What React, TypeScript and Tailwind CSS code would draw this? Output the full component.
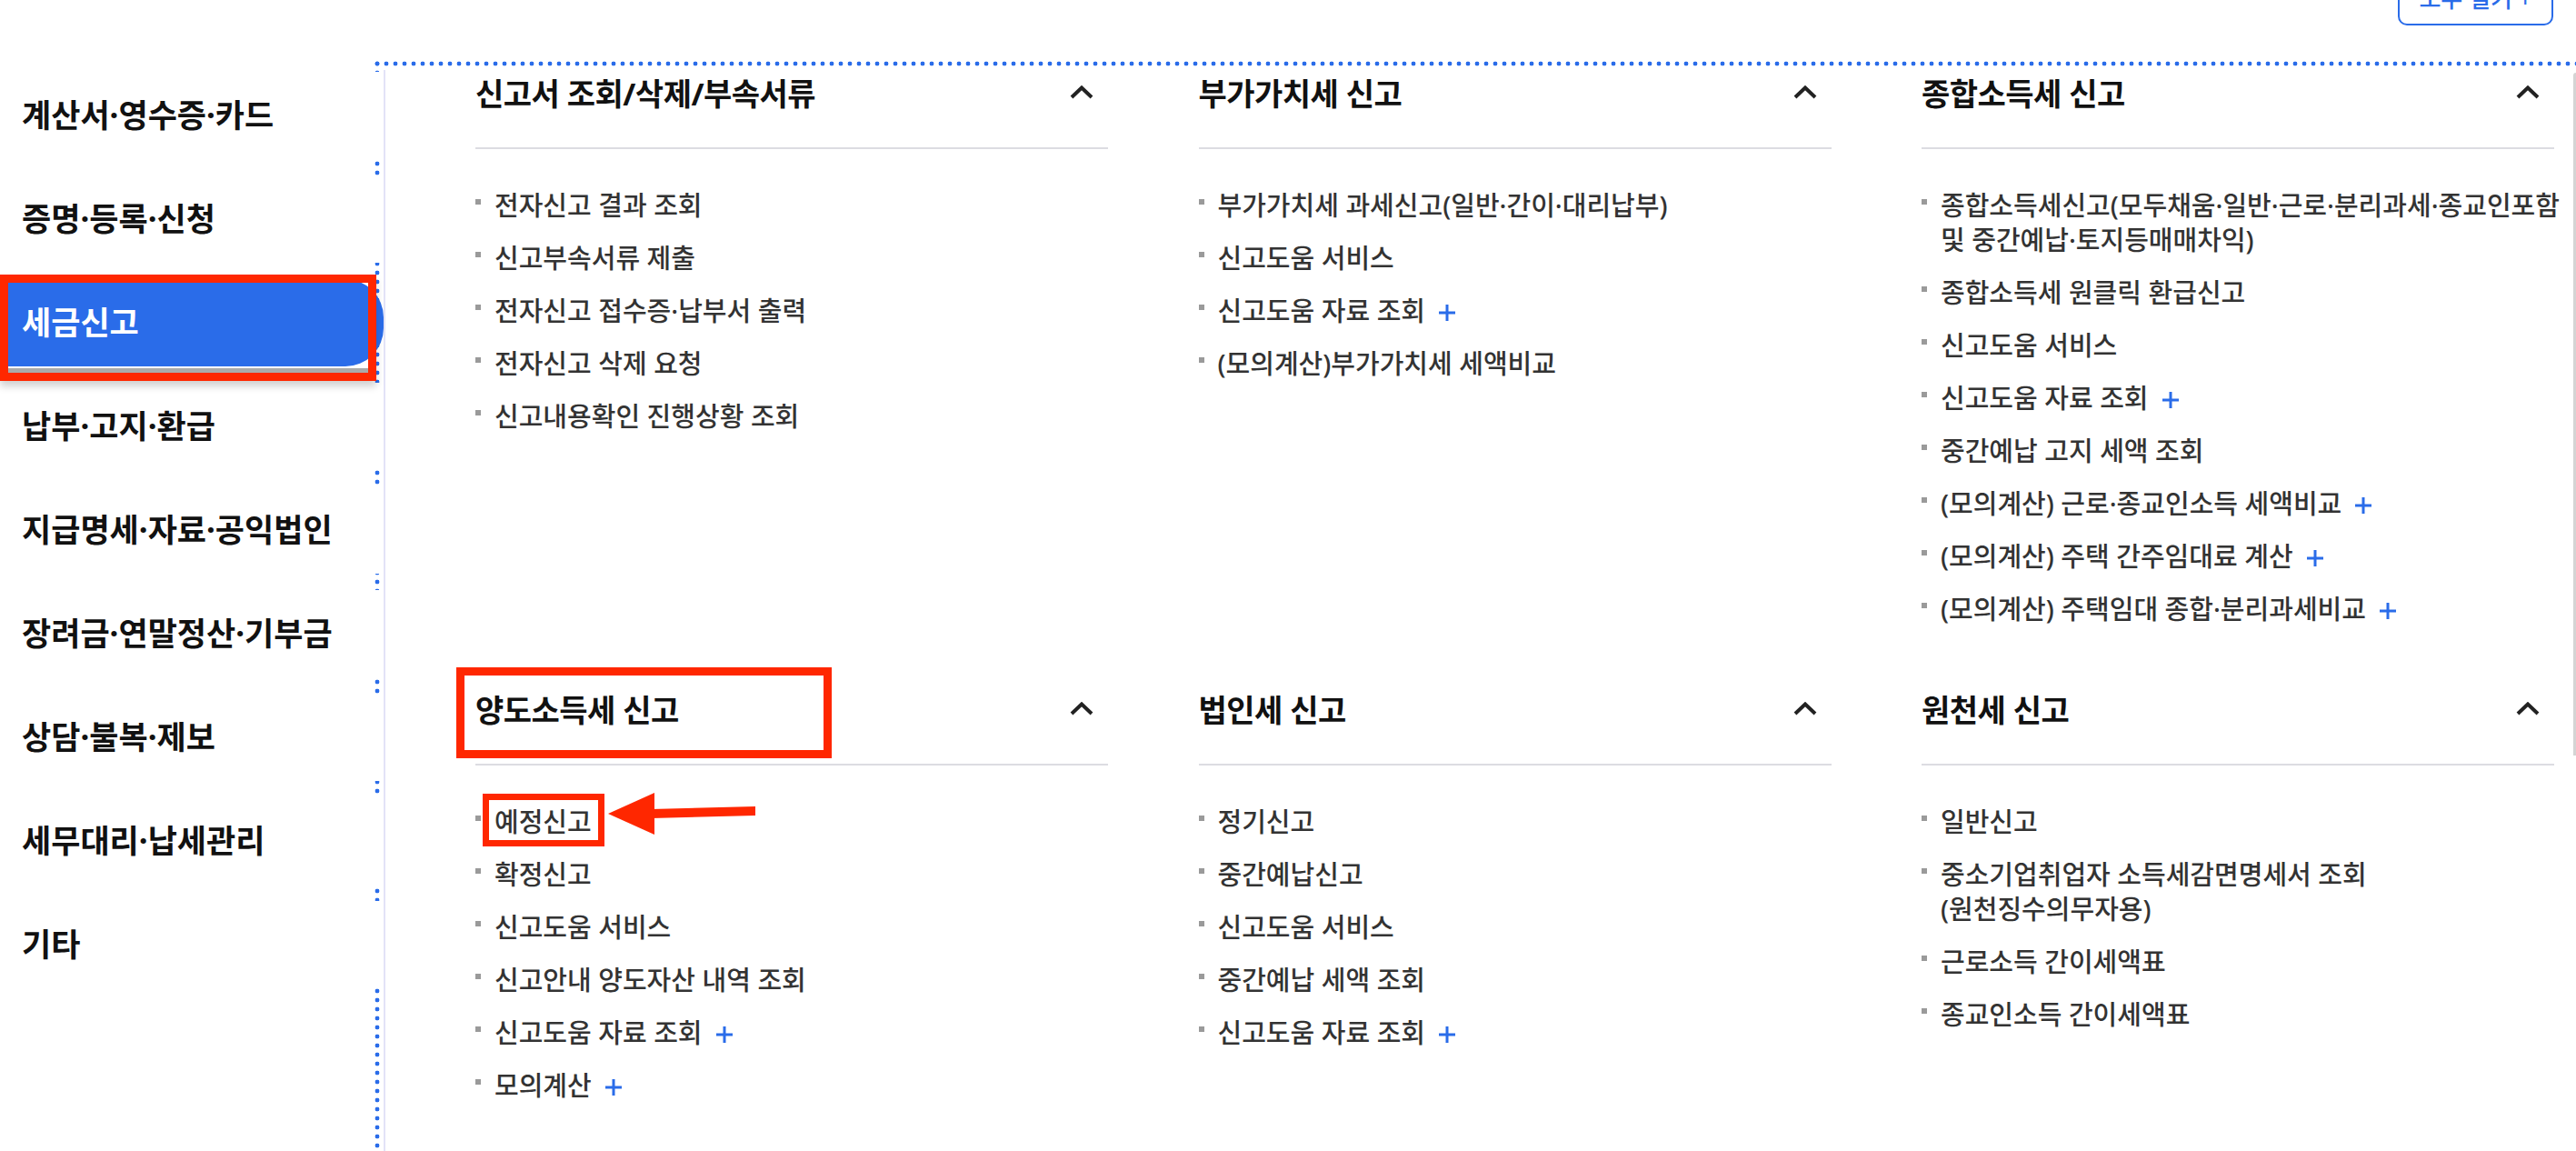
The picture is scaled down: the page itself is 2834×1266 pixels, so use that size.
import React from "react";

type Item = { lines: string[]; plus?: boolean };
type Sec = { title: string; items: Item[] };

const i = (t: string, plus?: boolean): Item => ({ lines: [t], plus });

const rows: Sec[] = [
  {
    title: "신고서 조회/삭제/부속서류",
    items: [
      i("전자신고 결과 조회"),
      i("신고부속서류 제출"),
      i("전자신고 접수증·납부서 출력"),
      i("전자신고 삭제 요청"),
      i("신고내용확인 진행상황 조회"),
    ],
  },
  {
    title: "부가가치세 신고",
    items: [
      i("부가가치세 과세신고(일반·간이·대리납부)"),
      i("신고도움 서비스"),
      i("신고도움 자료 조회", true),
      i("(모의계산)부가가치세 세액비교"),
    ],
  },
  {
    title: "종합소득세 신고",
    items: [
      { lines: ["종합소득세신고(모두채움·일반·근로·분리과세·종교인포함", "및 중간예납·토지등매매차익)"] },
      i("종합소득세 원클릭 환급신고"),
      i("신고도움 서비스"),
      i("신고도움 자료 조회", true),
      i("중간예납 고지 세액 조회"),
      i("(모의계산) 근로·종교인소득 세액비교", true),
      i("(모의계산) 주택 간주임대료 계산", true),
      i("(모의계산) 주택임대 종합·분리과세비교", true),
    ],
  },
  {
    title: "양도소득세 신고",
    items: [
      i("예정신고"),
      i("확정신고"),
      i("신고도움 서비스"),
      i("신고안내 양도자산 내역 조회"),
      i("신고도움 자료 조회", true),
      i("모의계산", true),
    ],
  },
  {
    title: "법인세 신고",
    items: [
      i("정기신고"),
      i("중간예납신고"),
      i("신고도움 서비스"),
      i("중간예납 세액 조회"),
      i("신고도움 자료 조회", true),
    ],
  },
  {
    title: "원천세 신고",
    items: [
      i("일반신고"),
      { lines: ["중소기업취업자 소득세감면명세서 조회", "(원천징수의무자용)"] },
      i("근로소득 간이세액표"),
      i("종교인소득 간이세액표"),
    ],
  },
];

const menu = [
  "계산서·영수증·카드",
  "증명·등록·신청",
  "세금신고",
  "납부·고지·환급",
  "지급명세·자료·공익법인",
  "장려금·연말정산·기부금",
  "상담·불복·제보",
  "세무대리·납세관리",
  "기타",
];

function Plus() {
  return (
    <svg width="20" height="20" viewBox="0 0 20 20" className="ml-[14px] mt-[3px] shrink-0" fill="none">
      <path d="M10 1V19M1 10H19" stroke="#2a6ce9" strokeWidth="3" />
    </svg>
  );
}

function Chevron() {
  return (
    <svg width="26" height="15" viewBox="0 0 26 15" className="mt-[17px] shrink-0" fill="none">
      <path d="M2 13L13 2.5L24 13" stroke="#222222" strokeWidth="4" />
    </svg>
  );
}

function Section({ sec }: { sec: Sec }) {
  return (
    <div className="flex flex-col">
      <div className="flex h-[85px] items-start justify-between pr-[16px]">
        <h3 className="pt-[4px] text-[34px] font-bold leading-[44px] tracking-[-0.5px] text-[#111111]">
          {sec.title}
        </h3>
        <Chevron />
      </div>
      <div className="h-[2px] bg-[#dcdce2]" />
      <ul className="flex flex-col gap-[20px] pt-[43px]">
        {sec.items.map((it, k) => (
          <li key={k} className="flex items-start">
            <span className="mt-[12px] h-[6px] w-[6px] shrink-0 bg-[#9a9a9a]" />
            <div className="ml-[15px] flex items-center whitespace-nowrap text-[29px] font-medium leading-[38px] text-[#333333]">
              <span>
                {it.lines.map((l, n) => (
                  <span key={n} className="block">
                    {l}
                  </span>
                ))}
              </span>
              {it.plus && <Plus />}
            </div>
          </li>
        ))}
      </ul>
    </div>
  );
}

export default function App() {
  return (
    <div className="relative flex h-[1266px] w-[2834px] overflow-hidden bg-white font-['Noto_Sans','Noto_Sans_CJK_KR',sans-serif]">
      <nav className="relative z-10 flex w-[410px] shrink-0 flex-col gap-[18px] pt-[79px]">
        {menu.map((m) =>
          m === "세금신고" ? (
            <div
              key={m}
              className="flex h-[96px] w-[422px] shrink-0 items-center rounded-r-[42px] bg-[#2a6ce9] pl-[24px] text-[35px] font-bold text-white"
            >
              {m}
            </div>
          ) : (
            <div
              key={m}
              className="flex h-[96px] w-[421px] shrink-0 items-center bg-white pl-[24px] text-[35px] font-bold text-[#111111]"
            >
              {m}
            </div>
          )
        )}
      </nav>

      <main className="flex min-w-0 flex-1 flex-col">
        <div className="flex h-[65px] shrink-0 justify-end pr-[25px]">
          <button className="-mt-[32px] flex h-[60px] w-[171px] items-center justify-center rounded-[10px] border-2 border-[#2a6ce9] text-[26px] font-medium text-[#2a6ce9]">
            모두 열기 +
          </button>
        </div>
        <div className="flex-1 pl-[12px] pt-[12px] [background-image:radial-gradient(circle,#2a6ce9_2.1px,transparent_2.7px),radial-gradient(circle,#2a6ce9_2.1px,transparent_2.7px)] [background-repeat:repeat-x,repeat-y] [background-size:10px_10px]">
          <div className="h-full border-l-2 border-[#e3e3f7] pl-[99px]">
            <div className="grid grid-cols-[696px_696px_696px] gap-x-[99.5px] gap-y-[66px]">
              {rows.map((s) => (
                <Section key={s.title} sec={s} />
              ))}
            </div>
          </div>
        </div>
      </main>

      {/* scrollbar sliver */}
      <div className="absolute right-0 top-[80px] h-[751px] w-[3px] rounded-tl-[3px] bg-[#d4d4d4]" />

      {/* annotations */}
      <div className="absolute left-0 top-[302px] z-20 h-[117px] w-[414px] border-[9px] border-[#ff2700] shadow-[0_6px_8px_rgba(0,0,0,0.18)]">
        <div className="absolute bottom-0 left-0 right-0 h-[5px] bg-[#aaaaaa]" />
      </div>
      <div className="absolute left-[502px] top-[734px] z-20 h-[100px] w-[413px] border-[9px] border-[#ff2700]" />
      <div className="absolute left-[531px] top-[873px] z-20 h-[58px] w-[134px] border-[7px] border-[#ff2700]" />
      <svg className="absolute left-[660px] top-[860px] z-20" width="180" height="70" viewBox="0 0 180 70">
        <polygon points="9,35 60,12 60,58" fill="#ff2700" />
        <polygon points="56,30 171,27 171,37 56,40" fill="#ff2700" />
      </svg>
    </div>
  );
}
